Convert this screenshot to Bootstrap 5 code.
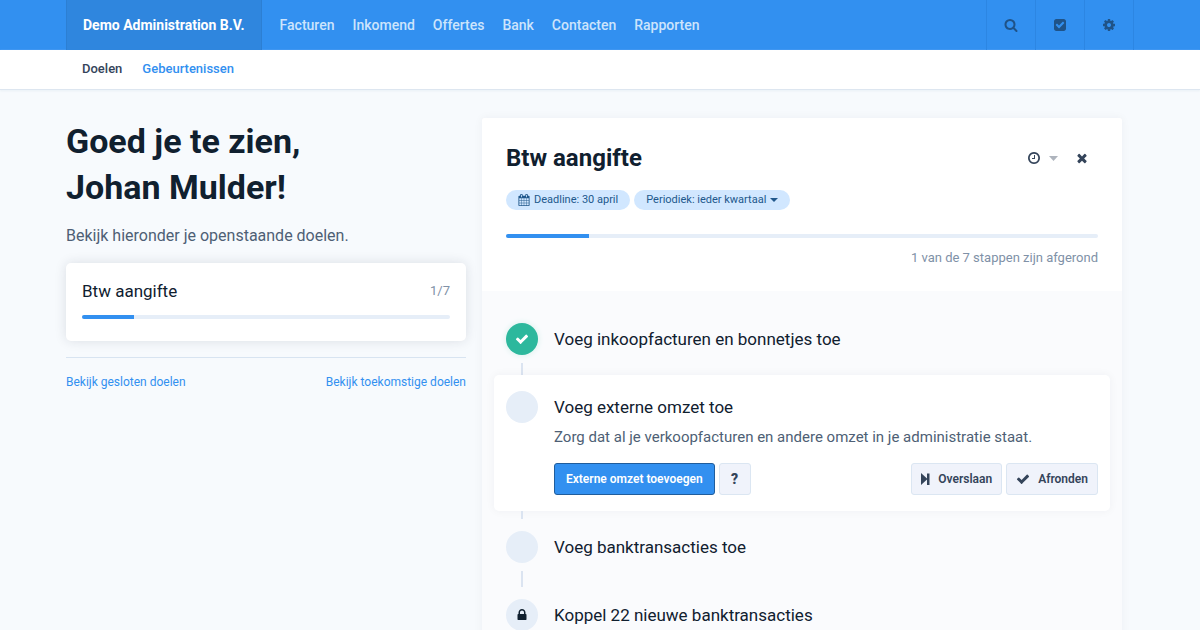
<!DOCTYPE html>
<html lang="nl">
<head>
<meta charset="utf-8">
<meta name="viewport" content="width=device-width, initial-scale=1">
<title>Doelen</title>
<link href="https://cdn.jsdelivr.net/npm/bootstrap@5.3.0/dist/css/bootstrap.min.css" rel="stylesheet">
<style>
  body { font-family: Roboto, "Liberation Sans", sans-serif; font-size: 14px; line-height: 24px; color: #10202f; background: #f7fafd; }
  a { color: #3290f0; text-decoration: none; }
  svg { fill: currentColor; display: block; flex: none; }
  .shell { width: 100%; max-width: 1068px; margin: 0 auto; }
  .topbar { background: #3290f0; min-height: 50px; }
  .company { background: #2f86de; border: solid #2c7fd3; border-width: 0 1px; padding: 0 16px; font-weight: 700; color: #fff; }
  .mainnav { gap: 18px; padding-left: 18px; }
  .mainnav a { color: #cce4fc; font-weight: 500; }
  .tool { width: 49px; border: 0; border-left: 1px solid #2c86e3; background: none; color: #1f5388; padding: 0; }
  .tools { border-right: 1px solid #2c86e3; }
  .subbar { background: #fff; border-bottom: 1px solid #dde6f0; box-shadow: 0 1px 2px #e9f0f6; }
  .subbar .shell { gap: 20px; padding: 7px 16px 8px; font-size: 13px; font-weight: 500; }
  .subbar .current { color: #34445a; }
  .board { grid-template-columns: 5fr 8fr; gap: 16px; padding: 28px 12px 0 0; align-items: start; }
  .hello { font-size: 34px; line-height: 46px; font-weight: 700; margin-bottom: 14px; }
  .intro { font-size: 16px; color: #4e5f75; margin-bottom: 15px; }
  .goal { background: #fff; border-radius: 5px; padding: 16px 16px 22px; box-shadow: 0 0 12px rgba(30,40,60,.13); color: inherit; display: block; }
  .step-title { font-size: 17px; font-weight: 400; line-height: 24px; margin: 0; }
  .count { font-size: 13px; color: #8091a7; }
  .progress { height: 4px; border-radius: 2px; background: #e6eef8; }
  .progress-bar { background: #3290f0; }
  .rule { border-top: 1px solid #d8e4f1; margin: 16px 0 12px; }
  .links { font-size: 12px; }
  .panel { background: #fafbfd; box-shadow: 0 0 10px rgba(30,40,60,.05); border-radius: 3px 3px 0 0; min-width: 0; }
  .panel-top { background: #fff; padding: 24px 24px 21px; border-radius: 3px 3px 0 0; }
  .panel-title { font-size: 24px; line-height: 32px; font-weight: 700; margin: 0; }
  .plain { border: 0; background: none; padding: 0; color: #34445a; }
  .faint { fill: #aeb4bd; }
  .caret { width: 0; height: 0; border: 4px solid transparent; border-top-color: currentColor; border-bottom: 0; }
  .chip { font-size: 11px; line-height: 20px; border: 0; border-radius: 10px; padding: 0 12px; background: #d1e7ff; color: #21588c; }
  .steps { padding: 16px 12px; margin: 0; list-style: none; gap: 4px; }
  .step { position: relative; padding: 16px 12px; gap: 16px; }
  .step:not(:last-child)::after { content: ""; position: absolute; left: 27px; bottom: -8px; width: 2px; height: 16px; background: #dbe4f1; }
  .step.active { background: #fff; border-radius: 5px; box-shadow: 0 0 10px rgba(30,40,60,.05); z-index: 1; }
  .step.active::after { height: 8px; }
  .step .step-title { line-height: 32px; }
  .dot { width: 32px; height: 32px; border-radius: 50%; background: #e6eef8; flex: none; }
  .dot.done { background: #2db89d; color: #fff; box-shadow: 0 0 6px #d5f0eb; }
  .note { line-height: 28px; font-size: 15px; color: #4e5f75; margin: 0 0 12px; }
  .act { height: 32px; border: 1px solid #dbe6f2; border-radius: 3px; background: #f0f3fb; color: #34445a; font-size: 12px; font-weight: 600; line-height: 24px; padding: 0 9px; }
  .act.main { background: #3290f0; border-color: #205d9c; color: #fff; padding: 0 11px; }
  .act.help { width: 32px; font-size: 14px; font-weight: 900; }
</style>
</head>
<body>
<header>
  <div class="topbar d-flex">
    <div class="shell d-flex">
      <a href="#" class="company d-flex align-items-center">Demo Administration B.V.</a>
      <nav class="mainnav d-flex align-items-center" aria-label="Hoofdmenu">
        <a href="#">Facturen</a><a href="#">Inkomend</a><a href="#">Offertes</a><a href="#">Bank</a><a href="#">Contacten</a><a href="#">Rapporten</a>
      </nav>
      <div class="tools d-flex ms-auto">
        <button class="tool d-flex align-items-center justify-content-center" aria-label="Zoeken"><svg width="14" height="14" viewBox="0 0 1792 1792"><path d="M1216 832q0-185-131.500-316.500t-316.500-131.500-316.500 131.500-131.500 316.500 131.500 316.500 316.500 131.500 316.500-131.500 131.500-316.500zm512 832q0 52-38 90t-90 38q-54 0-90-38l-343-342q-179 124-399 124-143 0-273.500-55.500t-225-150-150-225-55.500-273.500 55.500-273.500 150-225 225-150 273.500-55.500 273.500 55.500 225 150 150 225 55.500 273.500q0 220-124 399l343 343q37 37 37 90z"/></svg></button>
        <button class="tool d-flex align-items-center justify-content-center" aria-label="Taken"><svg width="14" height="14" viewBox="0 0 1792 1792"><path d="M813 1299l614-614q19-19 19-45t-19-45l-102-102q-19-19-45-19t-45 19l-467 467-211-211q-19-19-45-19t-45 19l-102 102q-19 19-19 45t19 45l358 358q19 19 45 19t45-19zm851-883v960q0 119-84.500 203.500t-203.500 84.500h-960q-119 0-203.500-84.500t-84.500-203.500v-960q0-119 84.500-203.500t203.500-84.500h960q119 0 203.500 84.500t84.500 203.500z"/></svg></button>
        <button class="tool d-flex align-items-center justify-content-center" aria-label="Instellingen"><svg width="14" height="14" viewBox="0 0 1792 1792"><path d="M1152 896q0-106-75-181t-181-75-181 75-75 181 75 181 181 75 181-75 75-181zm512-109v222q0 12-8 23t-20 13l-185 28q-19 54-39 91 35 50 107 138 10 12 10 25t-9 23q-27 37-99 108t-94 71q-12 0-26-9l-138-108q-44 23-91 38-16 136-29 186-7 28-36 28h-222q-14 0-24.500-8.500t-11.500-21.500l-28-184q-49-16-90-37l-141 107q-10 9-25 9-14 0-25-11-126-114-165-168-7-10-7-23 0-12 8-23 15-21 51-66.500t54-70.500q-27-50-41-99l-183-27q-13-2-21-12.500t-8-23.500v-222q0-12 8-23t19-13l186-28q14-46 39-92-40-57-107-138-10-12-10-24 0-10 9-23 26-36 98.500-107.500t94.500-71.500q13 0 26 10l138 107q44-23 91-38 16-136 29-186 7-28 36-28h222q14 0 24.500 8.500t11.500 21.500l28 184q49 16 90 37l142-107q9-9 24-9 13 0 25 10 129 119 165 170 7 8 7 22 0 12-8 23-15 21-51 66.500t-54 70.500q26 50 41 98l183 28q13 2 21 12.500t8 23.500z"/></svg></button>
      </div>
    </div>
  </div>
  <div class="subbar">
    <nav class="shell d-flex" aria-label="Submenu"><a href="#" class="current">Doelen</a><a href="#">Gebeurtenissen</a></nav>
  </div>
</header>
<main class="shell board d-grid">
  <section>
    <h1 class="hello">Goed je te zien,<br>Johan Mulder!</h1>
    <p class="intro">Bekijk hieronder je openstaande doelen.</p>
    <a href="#" class="goal">
      <div class="d-flex justify-content-between mb-2 pb-1"><h2 class="step-title">Btw aangifte</h2><span class="count">1/7</span></div>
      <div class="progress"><div class="progress-bar" style="width:14%"></div></div>
    </a>
    <div class="rule"></div>
    <div class="links d-flex justify-content-between"><a href="#">Bekijk gesloten doelen</a><a href="#">Bekijk toekomstige doelen</a></div>
  </section>
  <section class="panel">
    <div class="panel-top">
      <div class="d-flex align-items-center mb-3">
        <h2 class="panel-title">Btw aangifte</h2>
        <button class="plain d-flex align-items-center gap-2 ms-auto" aria-label="Uitstellen"><svg width="14" height="14" viewBox="0 0 1792 1792"><path d="M1024 544v448q0 14-9 23t-23 9h-320q-14 0-23-9t-9-23v-64q0-14 9-23t23-9h224v-352q0-14 9-23t23-9h64q14 0 23 9t9 23zm416 352q0-148-73-273t-198-198-273-73-273 73-198 198-73 273 73 273 198 198 273 73 273-73 198-198 73-273zm224 0q0 209-103 385.500t-279.500 279.500-385.500 103-385.500-103-279.500-279.500-103-385.500 103-385.500 279.500-279.500 385.500-103 385.500 103 279.500 279.500 103 385.500z"/></svg><svg class="faint" width="9" height="5" viewBox="0 0 9 5"><path d="M0 0h9L4.500 5z"/></svg></button>
        <button class="plain ms-3 me-2" aria-label="Sluiten"><svg width="16" height="14" viewBox="0 0 1792 1792"><path d="M1490 1322q0 40-28 68l-136 136q-28 28-68 28t-68-28l-294-294-294 294q-28 28-68 28t-68-28l-136-136q-28-28-28-68t28-68l294-294-294-294q-28-28-28-68t28-68l136-136q28-28 68-28t68 28l294 294 294-294q28-28 68-28t68 28l136 136q28 28 28 68t-28 68l-294 294 294 294q28 28 28 68z"/></svg></button>
      </div>
      <div class="d-flex gap-1 mb-4">
        <span class="chip d-flex align-items-center"><svg class="me-1" width="12" height="12" viewBox="0 0 1792 1792"><path d="M192 1664h288v-288h-288v288zm352 0h320v-288h-320v288zm-352-352h288v-320h-288v320zm352 0h320v-320h-320v320zm-352-384h288v-288h-288v288zm736 736h320v-288h-320v288zm-384-736h320v-288h-320v288zm768 736h288v-288h-288v288zm-384-352h320v-320h-320v320zm-352-864v-288q0-13-9.500-22.500t-22.500-9.500h-64q-13 0-22.500 9.500t-9.500 22.500v288q0 13 9.500 22.500t22.500 9.500h64q13 0 22.500-9.500t9.500-22.500zm736 864h288v-320h-288v320zm-384-384h320v-288h-320v288zm384 0h288v-288h-288v288zm32-480v-288q0-13-9.500-22.500t-22.500-9.500h-64q-13 0-22.500 9.500t-9.500 22.500v288q0 13 9.500 22.500t22.500 9.500h64q13 0 22.500-9.500t9.500-22.500zm384-64v1280q0 52-38 90t-90 38h-1408q-52 0-90-38t-38-90v-1280q0-52 38-90t90-38h128v-96q0-66 47-113t113-47h64q66 0 113 47t47 113v96h384v-96q0-66 47-113t113-47h64q66 0 113 47t47 113v96h128q52 0 90 38t38 90z"/></svg>Deadline: 30 april</span>
        <button class="chip d-flex align-items-center">Periodiek: ieder kwartaal<span class="caret ms-1"></span></button>
      </div>
      <div class="progress"><div class="progress-bar" style="width:14%"></div></div>
      <div class="count text-end mt-2">1 van de 7 stappen zijn afgerond</div>
    </div>
    <ol class="steps d-flex flex-column">
      <li class="step d-flex">
        <span class="dot done d-flex align-items-center justify-content-center"><svg width="14" height="14" viewBox="0 0 1792 1792"><path d="M1671 566q0 40-28 68l-724 724-136 136q-28 28-68 28t-68-28l-136-136-362-362q-28-28-28-68t28-68l136-136q28-28 68-28t68 28l294 295 656-657q28-28 68-28t68 28l136 136q28 28 28 68z"/></svg></span>
        <h3 class="step-title">Voeg inkoopfacturen en bonnetjes toe</h3>
      </li>
      <li class="step active d-flex">
        <span class="dot"></span>
        <div class="flex-grow-1">
          <h3 class="step-title">Voeg externe omzet toe</h3>
          <p class="note">Zorg dat al je verkoopfacturen en andere omzet in je administratie staat.</p>
          <div class="d-flex gap-1">
            <button class="act main">Externe omzet toevoegen</button>
            <button class="act help" aria-label="Hulp">?</button>
            <button class="act d-flex align-items-center ms-auto gap-2"><svg width="9" height="12" viewBox="0 0 9 12"><path d="M0 0l6 5.500V.5h2.500v11.500H6V6.500L0 12z"/></svg>Overslaan</button>
            <button class="act d-flex align-items-center gap-2"><svg width="14" height="14" viewBox="0 0 1792 1792"><path d="M1671 566q0 40-28 68l-724 724-136 136q-28 28-68 28t-68-28l-136-136-362-362q-28-28-28-68t28-68l136-136q28-28 68-28t68 28l294 295 656-657q28-28 68-28t68 28l136 136q28 28 28 68z"/></svg>Afronden</button>
          </div>
        </div>
      </li>
      <li class="step d-flex"><span class="dot"></span><h3 class="step-title">Voeg banktransacties toe</h3></li>
      <li class="step d-flex">
        <span class="dot d-flex align-items-center justify-content-center"><svg width="14" height="14" viewBox="0 0 1792 1792"><path d="M640 768h512v-192q0-106-75-181t-181-75-181 75-75 181v192zm832 96v576q0 40-28 68t-68 28h-960q-40 0-68-28t-28-68v-576q0-40 28-68t68-28h32v-192q0-184 132-316t316-132 316 132 132 316v192h32q40 0 68 28t28 68z"/></svg></span>
        <h3 class="step-title">Koppel 22 nieuwe banktransacties</h3>
      </li>
    </ol>
  </section>
</main>
<script src="https://cdn.jsdelivr.net/npm/bootstrap@5.3.0/dist/js/bootstrap.bundle.min.js"></script>
</body>
</html>
